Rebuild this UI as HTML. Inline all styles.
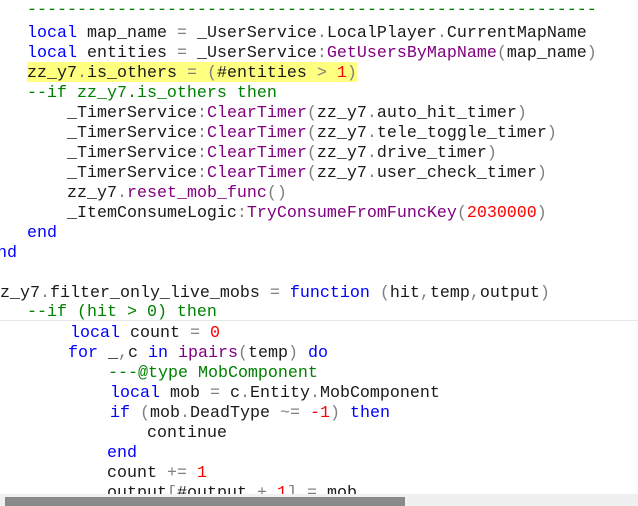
<!DOCTYPE html>
<html><head><meta charset="utf-8"><style>
html,body{margin:0;padding:0;background:#fff;width:638px;height:506px;overflow:hidden;position:relative}
.l{position:absolute;white-space:pre;font-family:"Liberation Mono","DejaVu Sans Mono",monospace;font-size:16.67px;line-height:20px;height:20px;color:#1a1a1a}
.k{color:#0000ff}.kb{color:#0000ff}
.c{color:#008000}.m{color:#800080}.n{color:#ff0000}.p{color:#808080}
.hl{position:absolute;left:27px;top:62px;width:330px;height:20px;background:#ffff80}
.sep{position:absolute;left:0;top:320px;width:638px;height:1px;background:#e6e6e6}
.track{position:absolute;left:0;top:494px;width:638px;height:12px;background:#f0f0f0}
.thumb{position:absolute;left:5px;top:497px;width:400px;height:9px;background:#8a8a8a}
</style></head><body>
<div class="hl"></div>
<div class="l c" style="left:27px;top:1px">---------------------------------------------------------</div>
<div class="l" style="left:27px;top:24px"><span class="kb">local</span> map_name <span class="p">=</span> _UserService<span class="p">.</span>LocalPlayer<span class="p">.</span>CurrentMapName</div>
<div class="l" style="left:27px;top:44px"><span class="kb">local</span> entities <span class="p">=</span> _UserService<span class="p">:</span><span class="m">GetUsersByMapName</span><span class="p">(</span>map_name<span class="p">)</span></div>
<div class="l" style="left:27px;top:64px">zz_y7<span class="p">.</span>is_others <span class="p">=</span> <span class="p">(</span>#entities <span class="p">&gt;</span> <span class="n">1</span><span class="p">)</span></div>
<div class="l c" style="left:27px;top:84px">--if zz_y7.is_others then</div>
<div class="l" style="left:67px;top:104px">_TimerService<span class="p">:</span><span class="m">ClearTimer</span><span class="p">(</span>zz_y7<span class="p">.</span>auto_hit_timer<span class="p">)</span></div>
<div class="l" style="left:67px;top:124px">_TimerService<span class="p">:</span><span class="m">ClearTimer</span><span class="p">(</span>zz_y7<span class="p">.</span>tele_toggle_timer<span class="p">)</span></div>
<div class="l" style="left:67px;top:144px">_TimerService<span class="p">:</span><span class="m">ClearTimer</span><span class="p">(</span>zz_y7<span class="p">.</span>drive_timer<span class="p">)</span></div>
<div class="l" style="left:67px;top:164px">_TimerService<span class="p">:</span><span class="m">ClearTimer</span><span class="p">(</span>zz_y7<span class="p">.</span>user_check_timer<span class="p">)</span></div>
<div class="l" style="left:67px;top:184px">zz_y7<span class="p">.</span><span class="m">reset_mob_func</span><span class="p">()</span></div>
<div class="l" style="left:67px;top:204px">_ItemConsumeLogic<span class="p">:</span><span class="m">TryConsumeFromFuncKey</span><span class="p">(</span><span class="n">2030000</span><span class="p">)</span></div>
<div class="l k" style="left:27px;top:224px">end</div>
<div class="l k" style="left:-13px;top:244px">end</div>
<div class="l" style="left:-10px;top:284px">zz_y7<span class="p">.</span>filter_only_live_mobs <span class="p">=</span> <span class="k">function</span> <span class="p">(</span>hit<span class="p">,</span>temp<span class="p">,</span>output<span class="p">)</span></div>
<div class="l c" style="left:27px;top:303px">--if (hit &gt; 0) then</div>
<div class="sep"></div>
<div class="l" style="left:70px;top:324px"><span class="kb">local</span> count <span class="p">=</span> <span class="n">0</span></div>
<div class="l" style="left:68px;top:344px"><span class="k">for</span> _<span class="p">,</span>c <span class="k">in</span> <span class="m">ipairs</span><span class="p">(</span>temp<span class="p">)</span> <span class="k">do</span></div>
<div class="l c" style="left:108px;top:364px">---@type MobComponent</div>
<div class="l" style="left:110px;top:384px"><span class="kb">local</span> mob <span class="p">=</span> c<span class="p">.</span>Entity<span class="p">.</span>MobComponent</div>
<div class="l" style="left:110px;top:404px"><span class="k">if</span> <span class="p">(</span>mob<span class="p">.</span>DeadType <span class="p">~=</span> <span class="n">-1</span><span class="p">)</span> <span class="k">then</span></div>
<div class="l" style="left:147px;top:424px">continue</div>
<div class="l k" style="left:107px;top:444px">end</div>
<div class="l" style="left:107px;top:464px">count <span class="p">+=</span> <span class="n">1</span></div>
<div class="l" style="left:107px;top:484px">output<span class="p">[</span>#output <span class="p">+</span> <span class="n">1</span><span class="p">]</span> <span class="p">=</span> mob</div>
<div class="track"></div>
<div class="thumb"></div>
</body></html>
